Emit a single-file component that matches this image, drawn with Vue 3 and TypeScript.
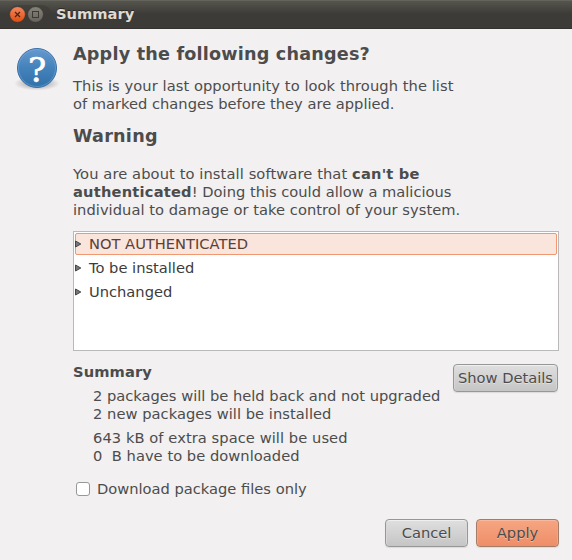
<script setup lang="ts">
import { ref } from 'vue'

const groups = ['NOT AUTHENTICATED', 'To be installed', 'Unchanged']
const selected = ref(0)
const downloadOnly = ref(false)
</script>

<template>
  <div class="window">
    <header class="titlebar">
      <svg class="controls" width="44" height="29" viewBox="0 0 44 29" aria-hidden="true">
        <defs>
          <linearGradient id="closeFill" x1="0" y1="0" x2="0" y2="1">
            <stop offset="0" stop-color="#f4885d" />
            <stop offset="1" stop-color="#e04d10" />
          </linearGradient>
          <linearGradient id="maxFill" x1="0" y1="0" x2="0" y2="1">
            <stop offset="0" stop-color="#85837a" />
            <stop offset="1" stop-color="#65635b" />
          </linearGradient>
        </defs>
        <rect x="0.5" y="5" width="43" height="19" rx="9.5" fill="#3d3c37" opacity="0.65" />
        <circle cx="9.5" cy="14.5" r="7.8" fill="url(#closeFill)" stroke="#35332f" stroke-width="0.5" />
        <path d="M7 12l5 5M12 12l-5 5" stroke="#42271b" stroke-width="1.2" />
        <circle cx="27.5" cy="14.5" r="7.8" fill="url(#maxFill)" stroke="#35332f" stroke-width="0.5" />
        <rect x="24.5" y="11.5" width="6" height="6" fill="none" stroke="#3b3a35" />
      </svg>
      <span class="title">Summary</span>
    </header>

    <main class="body">
      <svg class="question" width="48" height="48" viewBox="0 0 48 48" aria-hidden="true">
        <defs>
          <linearGradient id="qFill" x1="0" y1="0" x2="0" y2="1">
            <stop offset="0" stop-color="#6699cf" />
            <stop offset="0.5" stop-color="#4482bb" />
            <stop offset="1" stop-color="#3071aa" />
          </linearGradient>
          <radialGradient id="qShadow">
            <stop offset="0.5" stop-color="#000" stop-opacity="0.2" />
            <stop offset="1" stop-color="#000" stop-opacity="0" />
          </radialGradient>
        </defs>
        <ellipse cx="24" cy="39.5" rx="23" ry="7" fill="url(#qShadow)" />
        <circle cx="24" cy="24" r="19.5" fill="url(#qFill)" stroke="#3a70a8" />
        <circle cx="24" cy="24" r="18.5" fill="none" stroke="#8bb6df" stroke-opacity="0.4" />
        <text class="mark" x="24" y="37.5" text-anchor="middle">?</text>
      </svg>

      <section class="content">
        <h1 class="question-title">Apply the following changes?</h1>
        <p class="intro"><span class="wide-s">This is your last opportunity to look through the list</span><br />of marked changes before they are applied.</p>
        <h1 class="warning-title">Warning</h1>
        <p class="warning"><span class="wide-m">You are about to install software that </span><b>can't be<br />authenticated</b>! Doing this could allow a malicious<br /><span class="wide-xs">individual to damage or take control of your system.</span></p>

        <ul class="tree">
          <li
            v-for="(group, index) in groups"
            :key="group"
            :class="{ selected: index === selected }"
            @click="selected = index"
          >
            <svg width="8" height="9" viewBox="0 0 8 9" aria-hidden="true">
              <path d="M1.5 1L6.8 4L1.5 7Z" fill="#777" stroke="#454545" />
            </svg>
            <span>{{ group }}</span>
          </li>
        </ul>

        <div class="summary">
          <div class="facts">
            <h2>Summary</h2>
            <p>2 packages will be held back and not upgraded<br /><span class="wide-xs">2 new packages will be installed</span></p>
            <p><span class="wide-s">643 kB of extra space will be used</span><br /><span class="wide-xs">0&nbsp; B have to be downloaded</span></p>
          </div>
          <button class="btn details" type="button">Show Details</button>
        </div>

        <label class="check">
          <input v-model="downloadOnly" type="checkbox" />
          <span>Download package files only</span>
        </label>

        <footer class="actions">
          <button class="btn" type="button">Cancel</button>
          <button class="btn primary" type="button">Apply</button>
        </footer>
      </section>
    </main>
  </div>
</template>

<style>
body {
  margin: 0;
  background: #f2f0f1;
}
</style>

<style scoped>
.window {
  box-sizing: border-box;
  width: 572px;
  height: 560px;
  overflow: hidden;
  background: #f2f0f1;
  color: #4c4c4c;
  font: 14.667px/18px "DejaVu Sans", sans-serif;
  white-space: nowrap;
}
.titlebar {
  box-sizing: border-box;
  display: flex;
  align-items: center;
  height: 29px;
  padding-left: 8px;
  background: linear-gradient(#57564f 0, #3c3b37 14px, #3c3b37 100%);
  box-shadow: inset 0 1px #65645c, inset 0 -1px #33322e;
}
.title {
  margin: -2px 0 0 4px;
  color: #dfdbd2;
  font-weight: bold;
  text-shadow: 0 -1px #2b2a27;
}
.body {
  display: flex;
}
.question {
  flex: none;
  margin: 15px 12px 0 13px;
}
.mark {
  fill: #fff;
  stroke: #fff;
  stroke-width: 0.6px;
  font: 34px "DejaVu Serif", serif;
}
.content {
  width: 486px;
  padding-top: 14px;
}
h1, h2, p {
  margin: 0;
}
h1 {
  font-size: 17.6px;
  line-height: 22px;
}
.question-title {
  letter-spacing: 0.2px;
}
.warning-title {
  letter-spacing: 0.25px;
}
h2 {
  font-size: 14.667px;
  line-height: 18px;
  letter-spacing: 0.1px;
}
.wide-xs {
  letter-spacing: 0.04px;
}
.wide-s {
  letter-spacing: 0.07px;
}
.wide-m {
  letter-spacing: 0.1px;
}
.intro {
  margin: 12px 0;
}
.warning {
  margin-top: 18px;
}
.warning b {
  letter-spacing: 0.2px;
}
.tree {
  box-sizing: border-box;
  height: 120px;
  margin: 12px 0 0;
  padding: 1px;
  border: 1px solid #bab8b9;
  background: #fff;
  color: #3c3c3c;
  list-style: none;
}
.tree li {
  box-sizing: border-box;
  display: flex;
  align-items: center;
  gap: 7px;
  height: 22px;
  margin-bottom: 2px;
  border: 1px solid transparent;
  border-radius: 2px;
}
.tree li svg {
  margin-left: -2px;
}
.tree .selected {
  border-color: #f19772;
  background: #fae5dc;
  color: #5b4037;
}
.summary {
  display: flex;
  align-items: flex-start;
  justify-content: space-between;
  margin-top: 12px;
}
.facts p {
  margin: 6px 0 0 20px;
}
.btn {
  box-sizing: border-box;
  width: 83px;
  height: 28px;
  padding: 0;
  border: 1px solid #979797;
  border-radius: 4px;
  background: linear-gradient(#dfdfdf, #c5c5c5);
  box-shadow: inset 0 1px #efefef, inset 1px 0 #d7d7d7, inset -1px 0 #d7d7d7, 0 1px 1px #dcdada;
  color: #4c4c4c;
  font: inherit;
  text-shadow: 0 1px rgba(255, 255, 255, 0.4);
}
.details {
  width: 105px;
  margin: 1px 1px 0 0;
}
.primary {
  border-color: #a47c68;
  background: linear-gradient(#f7a582, #ee8e68);
  box-shadow: inset 0 1px #f9b79c, inset 1px 0 #f5a482, inset -1px 0 #f5a482, 0 1px 1px #dcdada;
}
.check {
  display: flex;
  align-items: center;
  gap: 7px;
  margin: 15px 0 0 3px;
}
.check input {
  appearance: none;
  box-sizing: border-box;
  width: 14px;
  height: 14px;
  margin: 0;
  border: 1px solid #989898;
  border-radius: 3px;
  background: #fff;
}
.check input:checked {
  background: #f19772;
}
.actions {
  display: flex;
  justify-content: flex-end;
  gap: 8px;
  margin-top: 21px;
}
</style>
